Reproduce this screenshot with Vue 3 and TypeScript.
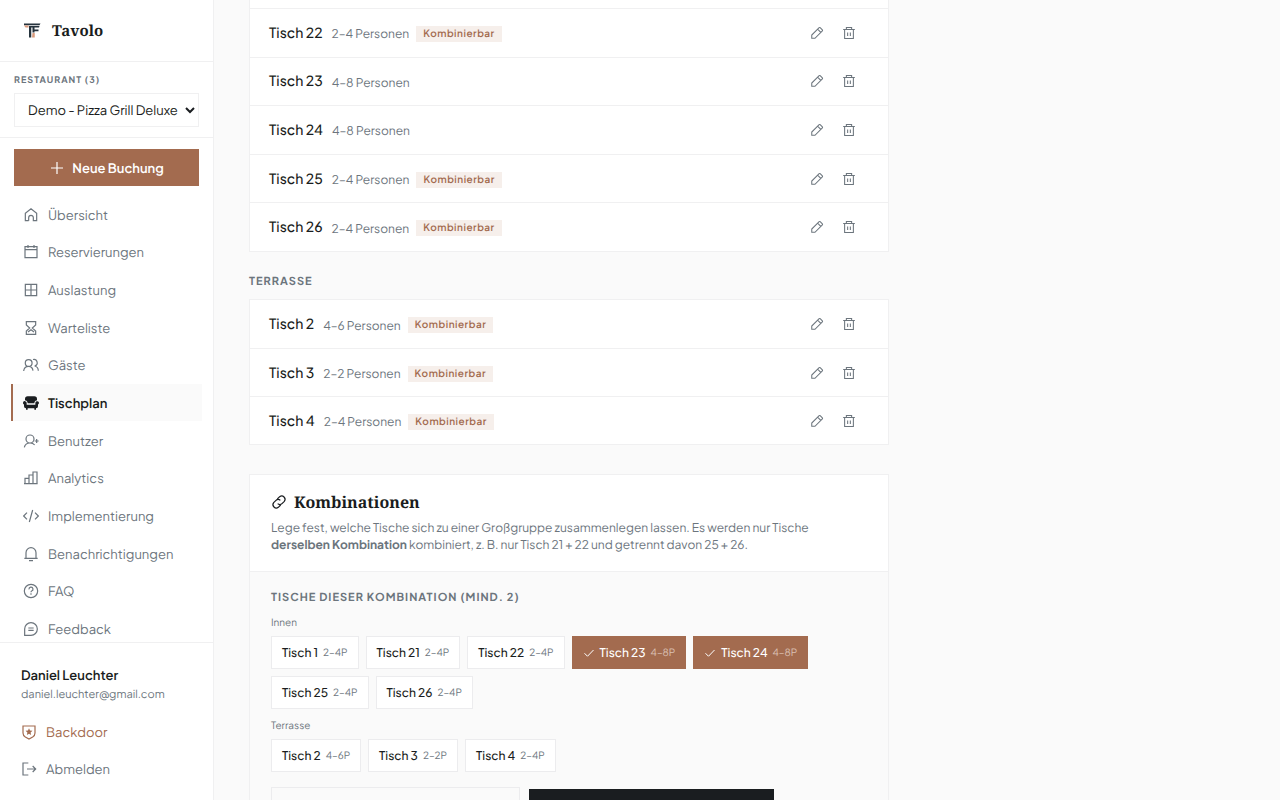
<script setup lang="ts">
import { ref } from 'vue'

interface NavItem { id: string; label: string; paths: string[]; solid?: boolean }
interface Tisch { nr: number; min: number; max: number; kombinierbar: boolean }

const nav: NavItem[] = [
  { id: 'uebersicht', label: 'Übersicht', paths: ['M8.500 20.500H3.500V9.500L12 2.800l8.500 6.700V20.500H15.500V16a3.500 3.500 0 0 0-7 0v4.500'] },
  { id: 'reservierungen', label: 'Reservierungen', paths: ['M3 4h18v16.500H3z', 'M3 8.500h18M7.500 1.500v4.500M16.500 1.500v4.500'] },
  { id: 'auslastung', label: 'Auslastung', paths: ['M3.500 3.500h17v17h-17zM12 3.500v17M3.500 12h17'] },
  { id: 'warteliste', label: 'Warteliste', paths: ['M5 2.500h14v5L14 12l5 4.500v5H5v-5L10 12 5 7.500zM7.500 18L12 14.500l4.500 3.500'] },
  { id: 'gaeste', label: 'Gäste', paths: ['M8.500 14a5 5 0 1 0 0-10.200 5 5 0 0 0 0 10.200zM1 21c.5-4.500 3.500-7 7.500-7s6 2.500 6.500 6.500', 'M15 3.800a5 5 0 0 1 2.500 9.700c3.500.8 5.300 3.500 5.500 7'] },
  { id: 'tischplan', label: 'Tischplan', solid: true, paths: ['M7 2h10a4 4 0 0 1 4 4v1.700A4.500 4.500 0 0 0 17 12v.5H7V12a4.500 4.500 0 0 0-4-4.300V6a4 4 0 0 1 4-4z', 'M3 9.200A2.700 2.700 0 0 1 5.500 12v2.500h13V12a2.700 2.700 0 1 1 4 2.300V17a3 3 0 0 1-3 3v2h-2.500v-2H7v2H4.500v-2a3 3 0 0 1-3-3v-2.700a2.700 2.700 0 0 1 1.500-5.100z'] },
  { id: 'benutzer', label: 'Benutzer', paths: ['M10.500 15a6 6 0 1 0 0-12 6 6 0 0 0 0 12zM2 21.500c.8-4 4-6.500 8.500-6.500 3 0 5.500 1 7 3', 'M20.500 9v6M17.500 12h6'] },
  { id: 'analytics', label: 'Analytics', paths: ['M3 12.500h6v8H3zM9 7.500h6v13H9zM15 3h6v17.500h-6zM1.500 20.500H22'] },
  { id: 'implementierung', label: 'Implementierung', paths: ['M6 7l-5 5 5 5M18 7l5 5-5 5M14.500 3l-5 18'] },
  { id: 'benachrichtigungen', label: 'Benachrichtigungen', paths: ['M4.500 18.500V10a7.500 7.500 0 0 1 15 0v8.500M2 18.500h20M9 22h6'] },
  { id: 'faq', label: 'FAQ', paths: ['M12 2a10 10 0 1 0 0 20 10 10 0 0 0 0-20z', 'M9 9.500A3 3 0 1 1 13 12c-.8.4-1 .9-1 2M12 15.500v2'] },
  { id: 'feedback', label: 'Feedback', paths: ['M2.500 21.500V12a9.500 9.500 0 1 1 9.500 9.500z', 'M8 10.500h8M8 14h8'] },
]

const active = ref('tischplan')
const restaurant = ref('Demo - Pizza Grill Deluxe')
const name = ref('')

const innenListe: Tisch[] = [
  { nr: 22, min: 2, max: 4, kombinierbar: true },
  { nr: 23, min: 4, max: 8, kombinierbar: false },
  { nr: 24, min: 4, max: 8, kombinierbar: false },
  { nr: 25, min: 2, max: 4, kombinierbar: true },
  { nr: 26, min: 2, max: 4, kombinierbar: true },
]
const terrasse: Tisch[] = [
  { nr: 2, min: 4, max: 6, kombinierbar: true },
  { nr: 3, min: 2, max: 2, kombinierbar: true },
  { nr: 4, min: 2, max: 4, kombinierbar: true },
]
const listen = [
  { id: 'innen', titel: '', tische: innenListe },
  { id: 'terrasse', titel: 'Terrasse', tische: terrasse },
]
const auswahl = [
  {
    titel: 'Innen',
    tische: [
      { nr: 1, min: 2, max: 4, kombinierbar: true },
      { nr: 21, min: 2, max: 4, kombinierbar: true },
      ...innenListe,
    ],
  },
  { titel: 'Terrasse', tische: terrasse },
]
const gewaehlt = ref<number[]>([23, 24])
function umschalten(nr: number): void {
  gewaehlt.value = gewaehlt.value.includes(nr)
    ? gewaehlt.value.filter((n) => n !== nr)
    : [...gewaehlt.value, nr]
}
</script>

<template>
  <div class="app">
    <aside class="sidebar">
      <header class="brand">
        <svg class="logo" viewBox="0 0 36 32" aria-hidden="true">
          <path fill="#26333d" d="M2 1h33l-2 3.500H2z" />
          <path fill="#d99a7c" d="M2 5h9v4H5z" />
          <path fill="#26333d" d="M12 6h21l-1 3H23v4h8v3.500h-8V19h-4V9h-2.500v20H12z" />
          <path fill="#d99a7c" d="M19 20h4.500v9H18z" />
        </svg>
        <span class="brand-name">Tavolo</span>
      </header>

      <div class="restaurant">
        <label for="restaurant">Restaurant (3)</label>
        <select id="restaurant" v-model="restaurant">
          <option>Demo - Pizza Grill Deluxe</option>
        </select>
      </div>

      <button class="new-booking" type="button">
        <svg class="icon" viewBox="0 0 24 24" aria-hidden="true"><path d="M12 3v18M3 12h18" /></svg>
        Neue Buchung
      </button>

      <nav class="nav">
        <div class="nav-list">
          <a
            v-for="item in nav"
            :key="item.id"
            :href="'#' + item.id"
            class="nav-item"
            :class="{ active: item.id === active }"
            @click.prevent="active = item.id"
          >
            <svg class="icon" :class="{ solid: item.solid }" viewBox="0 0 24 24" aria-hidden="true">
              <path v-for="p in item.paths" :key="p" :d="p" />
            </svg>
            {{ item.label }}
          </a>
        </div>
      </nav>

      <footer class="account">
        <div class="user-name">Daniel Leuchter</div>
        <div class="user-mail">daniel.leuchter@gmail.com</div>
        <a class="account-link accent" href="#backdoor">
          <svg class="icon" viewBox="0 0 24 24" aria-hidden="true">
            <path d="M3 3h18v10.500c0 3-1.500 4.700-3.500 6L12 22.500 6.500 19.500C4.500 18.200 3 16.500 3 13.500z" />
            <path class="fill" d="M12 6.500l1.500 3.400 3.700.4-2.800 2.500.8 3.600-3.200-1.900-3.200 1.900.8-3.600-2.800-2.500 3.700-.4z" />
          </svg>
          Backdoor
        </a>
        <a class="account-link" href="#abmelden">
          <svg class="icon" viewBox="0 0 24 24" aria-hidden="true">
            <path d="M11 3H3v18h8M9 12h13M17.500 7.500L22 12l-4.500 4.500" />
          </svg>
          Abmelden
        </a>
      </footer>
    </aside>

    <main class="content">
      <section v-for="liste in listen" :key="liste.id" class="area" :class="liste.id">
        <h3 v-if="liste.titel" class="area-title">{{ liste.titel }}</h3>
        <ul class="tables">
          <li v-for="t in liste.tische" :key="t.nr" class="table-row">
            <span class="table-name">Tisch {{ t.nr }}</span>
            <span class="seats">{{ t.min }}–{{ t.max }} Personen</span>
            <span v-if="t.kombinierbar" class="badge">Kombinierbar</span>
            <span class="actions">
              <button type="button" :aria-label="'Tisch ' + t.nr + ' bearbeiten'">
                <svg class="icon" viewBox="0 0 24 24" aria-hidden="true">
                  <path d="M3 21v-5.500L15.700 2.800a1.200 1.200 0 0 1 1.700 0l3.800 3.800a1.200 1.200 0 0 1 0 1.700L8.500 21zM13 5.500l5.500 5.500" />
                </svg>
              </button>
              <button type="button" :aria-label="'Tisch ' + t.nr + ' löschen'">
                <svg class="icon" viewBox="0 0 24 24" aria-hidden="true">
                  <path d="M2 6h20M4.500 6v15.500h15V6M7.500 6V2.500h9V6M9.700 11v6M14.300 11v6" />
                </svg>
              </button>
            </span>
          </li>
        </ul>
      </section>

      <section class="combos">
        <header class="combos-head">
          <h2>
            <svg class="icon" viewBox="0 0 24 24" aria-hidden="true">
              <path d="M9.500 7.500L13 4a5 5 0 0 1 7 7l-3.500 3.500a4.500 4.500 0 0 1-6.500 0M14.500 16.500L11 20a5 5 0 0 1-7-7l3.500-3.500a4.500 4.500 0 0 1 6.500 0" />
            </svg>
            Kombinationen
          </h2>
          <p>
            Lege fest, welche Tische sich zu einer Großgruppe zusammenlegen lassen. Es werden nur Tische
            <strong>derselben Kombination</strong> kombiniert, z. B. nur Tisch 21 + 22 und getrennt davon 25 + 26.
          </p>
        </header>
        <div class="combos-body">
          <h3 class="area-title">Tische dieser Kombination (mind. 2)</h3>
          <div v-for="gruppe in auswahl" :key="gruppe.titel" class="group">
            <div class="group-title">{{ gruppe.titel }}</div>
            <div class="chips">
              <button
                v-for="t in gruppe.tische"
                :key="t.nr"
                type="button"
                class="chip"
                :class="{ selected: gewaehlt.includes(t.nr) }"
                :aria-pressed="gewaehlt.includes(t.nr)"
                @click="umschalten(t.nr)"
              >
                <svg v-if="gewaehlt.includes(t.nr)" class="icon" viewBox="0 0 24 24" aria-hidden="true">
                  <path d="M3 12.500l6 6L21 6" />
                </svg>
                Tisch {{ t.nr }}
                <small>{{ t.min }}–{{ t.max }}P</small>
              </button>
            </div>
          </div>
          <form class="combo-form" @submit.prevent>
            <input v-model="name" type="text" aria-label="Name der Kombination" />
            <button type="submit" aria-label="Kombination speichern"></button>
          </form>
        </div>
      </section>
    </main>
  </div>
</template>

<style>
body {
  margin: 0;
  background: #fafafa;
}
</style>

<style scoped>
* {
  box-sizing: border-box;
}
.app {
  display: flex;
  height: 100vh;
  overflow: hidden;
  background: #fafafa;
  color: #1a1d20;
  font-family: 'Plus Jakarta Sans', Inter, 'Liberation Sans', sans-serif;
  font-size: 13px;
  text-rendering: geometricPrecision;
}
button,
input,
select {
  font: inherit;
  color: inherit;
  margin: 0;
  text-rendering: inherit;
}
button {
  border: 0;
  border-radius: 0;
  cursor: pointer;
}
a {
  color: inherit;
  text-decoration: none;
}
.icon {
  width: 16px;
  height: 16px;
  flex: none;
  fill: none;
  stroke: currentColor;
  stroke-width: 1.8;
}
.icon.solid,
.icon .fill {
  fill: currentColor;
  stroke: none;
}

.sidebar {
  display: flex;
  flex-direction: column;
  flex: none;
  width: 214px;
  background: #fff;
  border-right: 1px solid #f0f0f1;
}
.brand {
  display: flex;
  align-items: center;
  gap: 11px;
  height: 62px;
  flex: none;
  padding: 0 23px;
  border-bottom: 1px solid #f0f0f1;
}
.logo {
  width: 18px;
  height: 16px;
}
.brand-name,
h2 {
  font-family: 'Noto Serif', 'DejaVu Serif Condensed', 'Liberation Serif', serif;
  font-weight: 700;
  font-size: 16px;
}
.brand-name {
  font-size: 15px;
}
.restaurant {
  flex: none;
  padding: 12px 14px 10px;
  border-bottom: 1px solid #f0f0f1;
}
.restaurant label {
  display: block;
  margin-bottom: 7px;
  color: #6c757d;
  font-size: 9px;
  line-height: 12px;
  font-weight: 700;
  letter-spacing: 1px;
  text-transform: uppercase;
}
.restaurant select {
  display: block;
  width: 100%;
  height: 34px;
  padding: 0 0 0 9px;
  border: 1px solid #f0f0f1;
  border-radius: 0;
  background: #fff;
}
.new-booking {
  display: flex;
  align-items: center;
  justify-content: center;
  gap: 7px;
  flex: none;
  height: 37px;
  margin: 11px 14px 10px;
  background: #a36b4f;
  color: #fff;
  font-weight: 600;
}
.nav {
  flex: 1;
  min-height: 0;
  overflow: hidden;
  padding: 0 11px;
}
.nav-list {
  display: grid;
  grid-auto-rows: 1fr;
  gap: 1px;
  height: 451px;
}
.nav-item {
  display: flex;
  align-items: center;
  gap: 9px;
  padding: 1px 0 0 10px;
  border-left: 2px solid transparent;
  color: #6c757d;
}
.nav-item.active {
  background: #fafafa;
  border-left-color: #a36b4f;
  color: #1a1d20;
  font-weight: 600;
}
.account {
  flex: none;
  padding: 22px 21px 13px;
  border-top: 1px solid #f0f0f1;
}
.user-name {
  font-weight: 600;
  line-height: 20px;
}
.user-mail {
  margin-bottom: 8px;
  color: #6c757d;
  font-size: 11px;
  line-height: 20px;
}
.account-link {
  display: flex;
  align-items: center;
  gap: 9px;
  height: 37px;
  color: #6c757d;
}
.account-link.accent {
  color: #a36b4f;
}

.content {
  flex: 1;
  min-width: 0;
  padding-left: 35px;
  overflow: hidden;
}
.area,
.combos {
  max-width: 640px;
}
.tables {
  display: grid;
  grid-auto-rows: 1fr;
  margin: 0;
  padding: 0;
  list-style: none;
  background: #fff;
  border: 1px solid #f0f0f1;
}
.innen .tables {
  height: 252px;
  padding-top: 8px;
  border-top: 0;
}
.terrasse .tables {
  height: 146px;
}
.table-row {
  display: flex;
  align-items: center;
  padding: 0 27px 0 19px;
  border-top: 1px solid #f0f0f1;
}
.terrasse .table-row:first-child {
  border-top: 0;
}
.table-name {
  margin-right: 9px;
  font-size: 14px;
  font-weight: 500;
}
.seats {
  margin-right: 7px;
  padding-top: 2px;
  color: #6c757d;
  font-size: 12px;
}
.badge {
  margin-top: 2px;
  padding: 0 7px;
  background: #f6efeb;
  color: #a36b4f;
  font-size: 10px;
  font-weight: 600;
  line-height: 16px;
  letter-spacing: 0.5px;
}
.actions {
  display: flex;
  gap: 8px;
  margin-left: auto;
}
.actions button {
  display: grid;
  place-items: center;
  width: 24px;
  height: 28px;
  padding: 0;
  background: none;
  color: #6c757d;
}
.actions .icon {
  width: 14px;
  height: 14px;
}
.area-title {
  margin: 0;
  color: #6c757d;
  font-size: 11px;
  font-weight: 700;
  line-height: 16px;
  letter-spacing: 1px;
  text-transform: uppercase;
}
.terrasse .area-title {
  padding: 22px 0 9px;
}
.combos {
  margin-top: 29px;
  background: #fff;
  border: 1px solid #f0f0f1;
}
.combos-head {
  padding: 15px 21px 18px;
}
h2 {
  display: flex;
  align-items: center;
  gap: 7px;
  margin: 0 0 5px;
  line-height: 24px;
}
.combos-head p {
  max-width: 540px;
  margin: 0;
  color: #6c757d;
  font-size: 12px;
  line-height: 17px;
}
.combos-head strong {
  font-weight: 700;
}
.combos-body {
  padding: 18px 21px;
  background: #fafafa;
  border-top: 1px solid #f0f0f1;
}
.group {
  margin-bottom: 9px;
}
.group-title {
  padding: 9px 0 5px;
  color: #6c757d;
  font-size: 10px;
  line-height: 16px;
}
.group + .group .group-title {
  padding-top: 0;
}
.chips {
  display: flex;
  flex-wrap: wrap;
  gap: 7px;
}
.chip {
  display: flex;
  align-items: center;
  gap: 5px;
  height: 33px;
  padding: 0 10px;
  background: #fff;
  border: 1px solid #ececee;
  font-size: 12px;
  font-weight: 500;
}
.chip small {
  color: #6c757d;
  font-size: 10px;
  font-weight: 400;
}
.chip .icon {
  width: 12px;
  height: 12px;
  stroke-width: 2;
}
.chip.selected {
  background: #a36b4f;
  border-color: #a36b4f;
  color: #fff;
}
.chip.selected small {
  color: #dbc1b4;
}
.combo-form {
  display: flex;
  align-items: center;
  gap: 9px;
  margin-top: 15px;
}
.combo-form input {
  width: 249px;
  height: 37px;
  padding: 0 10px;
  border: 1px solid #ececee;
  background: #fafafa;
}
.combo-form button {
  width: 245px;
  height: 33px;
  background: #1a1d20;
}
</style>
